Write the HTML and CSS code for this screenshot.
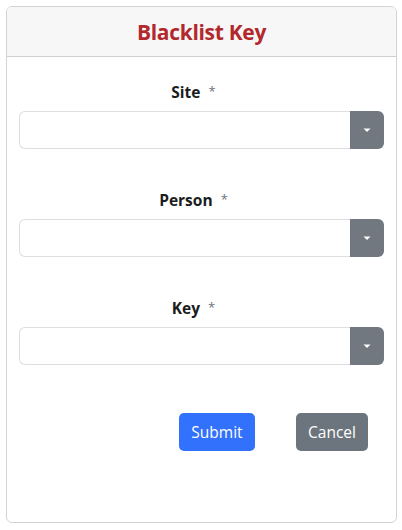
FILE: index.html
```html
<!DOCTYPE html>
<html>
<head>
<meta charset="utf-8">
<link rel="stylesheet" href="styles.css">
</head>
<body>
<div class="card">
  <div class="card-header"><h1 class="title">Blacklist Key</h1></div>
  <div class="card-body">
    <div class="field">
      <label class="label">Site <span class="req">*</span></label>
      <div class="select">
        <div class="select-input"></div>
        <div class="select-btn"><svg width="10" height="6" viewBox="0 0 10 6"><path d="M1.5 1.5h7L5 5z" fill="#fff"/></svg></div>
      </div>
    </div>
    <div class="field">
      <label class="label">Person <span class="req">*</span></label>
      <div class="select">
        <div class="select-input"></div>
        <div class="select-btn"><svg width="10" height="6" viewBox="0 0 10 6"><path d="M1.5 1.5h7L5 5z" fill="#fff"/></svg></div>
      </div>
    </div>
    <div class="field">
      <label class="label">Key <span class="req">*</span></label>
      <div class="select">
        <div class="select-input"></div>
        <div class="select-btn"><svg width="10" height="6" viewBox="0 0 10 6"><path d="M1.5 1.5h7L5 5z" fill="#fff"/></svg></div>
      </div>
    </div>
    <div class="actions">
      <button class="btn btn-primary">Submit</button>
      <button class="btn btn-secondary">Cancel</button>
    </div>
  </div>
</div>
</body>
</html>
```

FILE: styles.css
```css
* { box-sizing: border-box; }
html, body { margin: 0; padding: 0; background: #fff; }
body {
  font-family: "Open Sans", "Noto Sans", "Liberation Sans", sans-serif;
  color: #212529;
  padding: 6px 5px 7px 6px;
}
.card {
  height: 517px;
  border: 1px solid #d3d3d3;
  border-radius: 6px;
  display: flex;
  flex-direction: column;
  overflow: hidden;
}
.card-header {
  background: #f7f7f7;
  border-bottom: 1px solid #d0d0d0;
  height: 50px;
  display: flex;
  align-items: center;
  justify-content: center;
}
.title {
  margin: 0;
  font-size: 21px;
  font-weight: 700;
  color: #b3282d;
  letter-spacing: -0.3px;
}
.card-body {
  padding: 24px 12px 0 12px;
}
.field {
  display: flex;
  flex-direction: column;
  align-items: center;
  margin-bottom: 40px;
}
.label {
  font-size: 15.5px;
  font-weight: 700;
  height: 22px;
  line-height: 22px;
  margin-bottom: 8px;
  margin-right: 16px;
  color: #1a1d20;
}
.req {
  color: #6c757d;
  font-weight: 400;
  font-size: 13px;
  margin-left: 4px;
  position: relative;
  top: -2px;
}
.select {
  width: 100%;
  height: 38px;
  display: flex;
}
.select-input {
  flex: 1;
  border: 1px solid #dcdee2;
  border-right: none;
  border-radius: 6px 0 0 6px;
}
.select-btn {
  width: 34px;
  background: #71787f;
  border-radius: 0 6px 6px 0;
  display: flex;
  align-items: center;
  justify-content: center;
}
.actions {
  display: flex;
  padding-left: 160px;
  gap: 41px;
  margin-top: 48px;
}
.btn {
  height: 38px;
  border: none;
  border-radius: 5px;
  color: #fff;
  font-family: inherit;
  font-size: 15.5px;
  padding: 0 10px;
}
.btn-primary { background: #3171fb; width: 76px; }
.btn-secondary { background: #6c757d; width: 72px; }
```
